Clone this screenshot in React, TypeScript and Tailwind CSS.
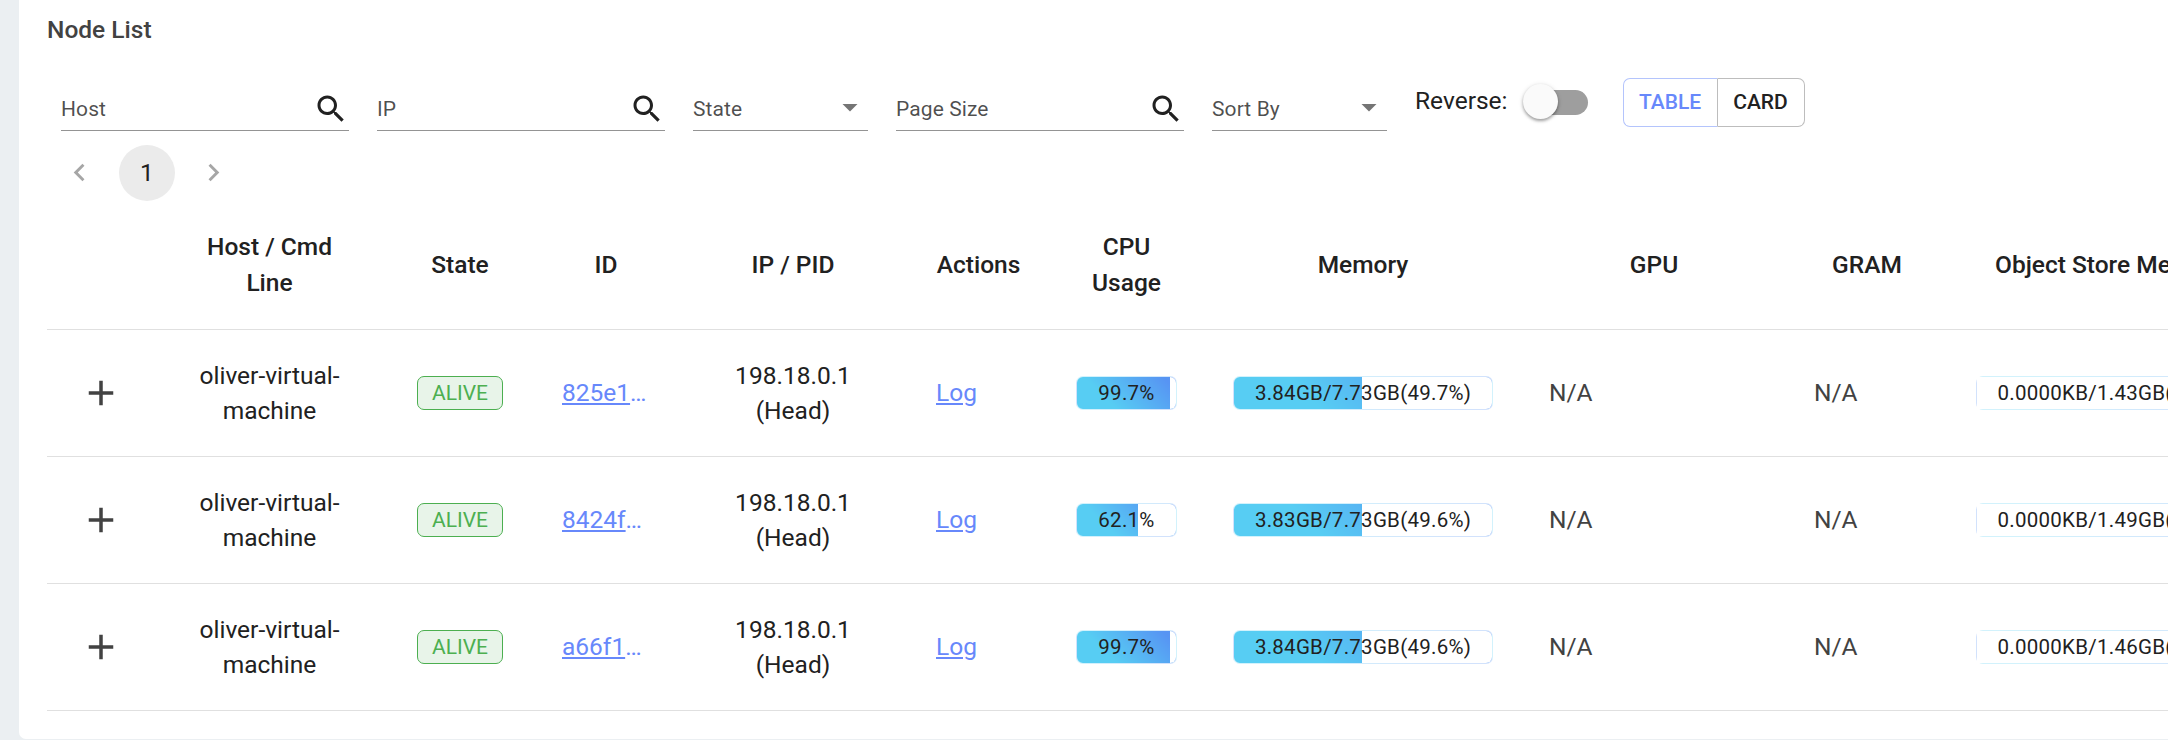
import React from "react";

const nodes = [
  { id: "825e1", cpu: 99.7, mem: "3.84GB/7.73GB(49.7%)", memPct: 49.7, store: "0.0000KB/1.43GB(0.0%)" },
  { id: "8424f", cpu: 62.1, mem: "3.83GB/7.73GB(49.6%)", memPct: 49.6, store: "0.0000KB/1.49GB(0.0%)" },
  { id: "a66f1", cpu: 99.7, mem: "3.84GB/7.73GB(49.6%)", memPct: 49.6, store: "0.0000KB/1.46GB(0.0%)" },
];

function SearchField({ label }: { label: string }) {
  return (
    <div className="flex h-[44px] w-[288px] items-center justify-between border-b border-[#949494]">
      <span className="text-[21px] leading-[44px] tracking-[0.1px] text-black/70">{label}</span>
      <svg viewBox="0 0 24 24" className="size-[36px] fill-[#212121]">
        <path d="M15.5 14h-.79l-.28-.27C15.41 12.59 16 11.11 16 9.5 16 5.91 13.09 3 9.5 3S3 5.91 3 9.5 5.91 16 9.5 16c1.61 0 3.09-.59 4.23-1.57l.27.28v.79l5 4.99L20.49 19l-4.99-5zm-6 0C7.01 14 5 11.99 5 9.5S7.01 5 9.5 5 14 7.01 14 9.5 11.99 14 9.5 14z" />
      </svg>
    </div>
  );
}

function SelectField({ label }: { label: string }) {
  return (
    <div className="flex h-[44px] w-[175px] items-center justify-between border-b border-[#949494]">
      <span className="text-[21px] leading-[44px] tracking-[0.1px] text-black/70">{label}</span>
      <svg viewBox="0 0 24 24" className="-mt-1 size-[36px] fill-[#757575]">
        <path d="M7 10l5 5 5-5z" />
      </svg>
    </div>
  );
}

function Bar({ value, text }: { value: number; text: string }) {
  return (
    <div className="relative mx-auto box-border h-[34px] w-fit rounded-[7px] border border-white/73 bg-[linear-gradient(45deg,#57cdf3_30%,#5794f3_90%)] px-[21px] text-[20.5px] leading-[32px] tracking-[0.26px] whitespace-nowrap">
      <div
        className="absolute top-0 right-0 h-full min-w-[6px] rounded-r-[6px] bg-white"
        style={{ width: `${100 - value}%` }}
      />
      <span className="relative">{text}</span>
    </div>
  );
}

export default function App() {
  return (
    <div className="h-[740px] w-[2168px] overflow-hidden bg-[#ebeff2] pl-[19px] font-[Roboto,sans-serif] text-[#212121]">
      <div className="h-[739px] overflow-hidden rounded-bl-[7px] bg-white pl-[28px]">
        <h1 className="h-[64px] pt-[12px] text-[24.5px] leading-[36px] font-medium text-[#424242]">Node List</h1>

        <div className="flex h-[67px] pl-[14px]">
          <div className="flex gap-[28px] pt-[23px]">
            <SearchField label="Host" />
            <SearchField label="IP" />
            <SelectField label="State" />
            <SearchField label="Page Size" />
            <SelectField label="Sort By" />
          </div>
          <div className="ml-[28px] flex h-[76px] items-start">
            <span className="mt-[19px] text-[24.5px] leading-[36px]">Reverse:</span>
            <div className="relative mt-[26px] ml-[24px] h-[25px] w-[56px] rounded-full bg-[#9e9e9e]">
              <div className="absolute -top-[6px] -left-[9px] size-[35px] rounded-full bg-[#fafafa] shadow-[0_2px_3px_rgba(0,0,0,0.3),0_1px_5px_rgba(0,0,0,0.15)]" />
            </div>
          </div>
          <div className="mt-[14px] ml-[35px] flex h-[49px] text-[21px] leading-[47px] font-medium">
            <div className="w-[95px] rounded-l-[7px] border border-[#b4c4fc] border-r-[#bdbdbd] text-center text-[#6788fb]">TABLE</div>
            <div className="w-[87px] rounded-r-[7px] border border-l-0 border-[#bdbdbd] text-center">CARD</div>
          </div>
        </div>

        <div className="flex h-[68px] items-center pt-[15px] pl-[14px]">
          <svg viewBox="0 0 24 24" className="ml-[1px] size-[35px] fill-[#a6a6a6]">
            <path d="M15.41 7.41L14 6l-6 6 6 6 1.41-1.41L10.83 12z" />
          </svg>
          <div className="mr-[21px] ml-[22px] size-[56px] rounded-full bg-[#ebebeb] text-center text-[24.5px] leading-[56px]">1</div>
          <svg viewBox="0 0 24 24" className="size-[35px] fill-[#a6a6a6]">
            <path d="M10 6L8.59 7.41 13.17 12l-4.58 4.59L10 18l6-6z" />
          </svg>
        </div>

        <table className="w-[2227px] table-fixed border-collapse text-center text-[24.5px] leading-[35px]">
          <colgroup>
            <col className="w-[106px]" />
            <col className="w-[233px]" />
            <col className="w-[148px]" />
            <col className="w-[144px]" />
            <col className="w-[230px]" />
            <col className="w-[141px]" />
            <col className="w-[155px]" />
            <col className="w-[318px]" />
            <col className="w-[264px]" />
            <col className="w-[162px]" />
            <col className="w-[326px]" />
          </colgroup>
          <thead>
            <tr className="h-[130px] border-b border-[#e0e0e0] leading-[36px] [&>th]:pt-[2px] [&>th]:font-medium">
              <th />
              <th>Host / Cmd<br />Line</th>
              <th>State</th>
              <th>ID</th>
              <th>IP / PID</th>
              <th>Actions</th>
              <th>CPU<br />Usage</th>
              <th>Memory</th>
              <th>GPU</th>
              <th>GRAM</th>
              <th className="whitespace-nowrap">Object Store Memory</th>
            </tr>
          </thead>
          <tbody>
            {nodes.map((n) => (
              <tr key={n.id} className="h-[127px] border-b border-[#e0e0e0]">
                <td className="pl-[1px]">
                  <svg viewBox="0 0 24 24" className="mx-auto size-[42px] fill-[#424242]">
                    <path d="M19 13h-6v6h-2v-6H5v-2h6V5h2v6h6v2z" />
                  </svg>
                </td>
                <td>oliver-virtual-<br />machine</td>
                <td>
                  <span className="mx-auto block h-[34px] w-[86px] rounded-[7px] border border-[#4caf50] bg-[#e8f4e9] text-[21px] leading-[33px] text-[#4caf50]">ALIVE</span>
                </td>
                <td>
                  <div className="mx-auto w-[88px] text-left text-[#6788fb]">
                    <span className="underline decoration-2 underline-offset-[2px]">{n.id}</span>…
                  </div>
                </td>
                <td>198.18.0.1<br />(Head)</td>
                <td className="pl-[28px] text-left text-[#6788fb]">
                  <span className="underline decoration-2 underline-offset-[2px]">Log</span>
                </td>
                <td><Bar value={n.cpu} text={`${n.cpu}%`} /></td>
                <td><Bar value={n.memPct} text={n.mem} /></td>
                <td className="pl-[27px] text-left text-[#424242]">N/A</td>
                <td className="pl-[28px] text-left text-[#424242]">N/A</td>
                <td><Bar value={0} text={n.store} /></td>
              </tr>
            ))}
          </tbody>
        </table>
      </div>
    </div>
  );
}
